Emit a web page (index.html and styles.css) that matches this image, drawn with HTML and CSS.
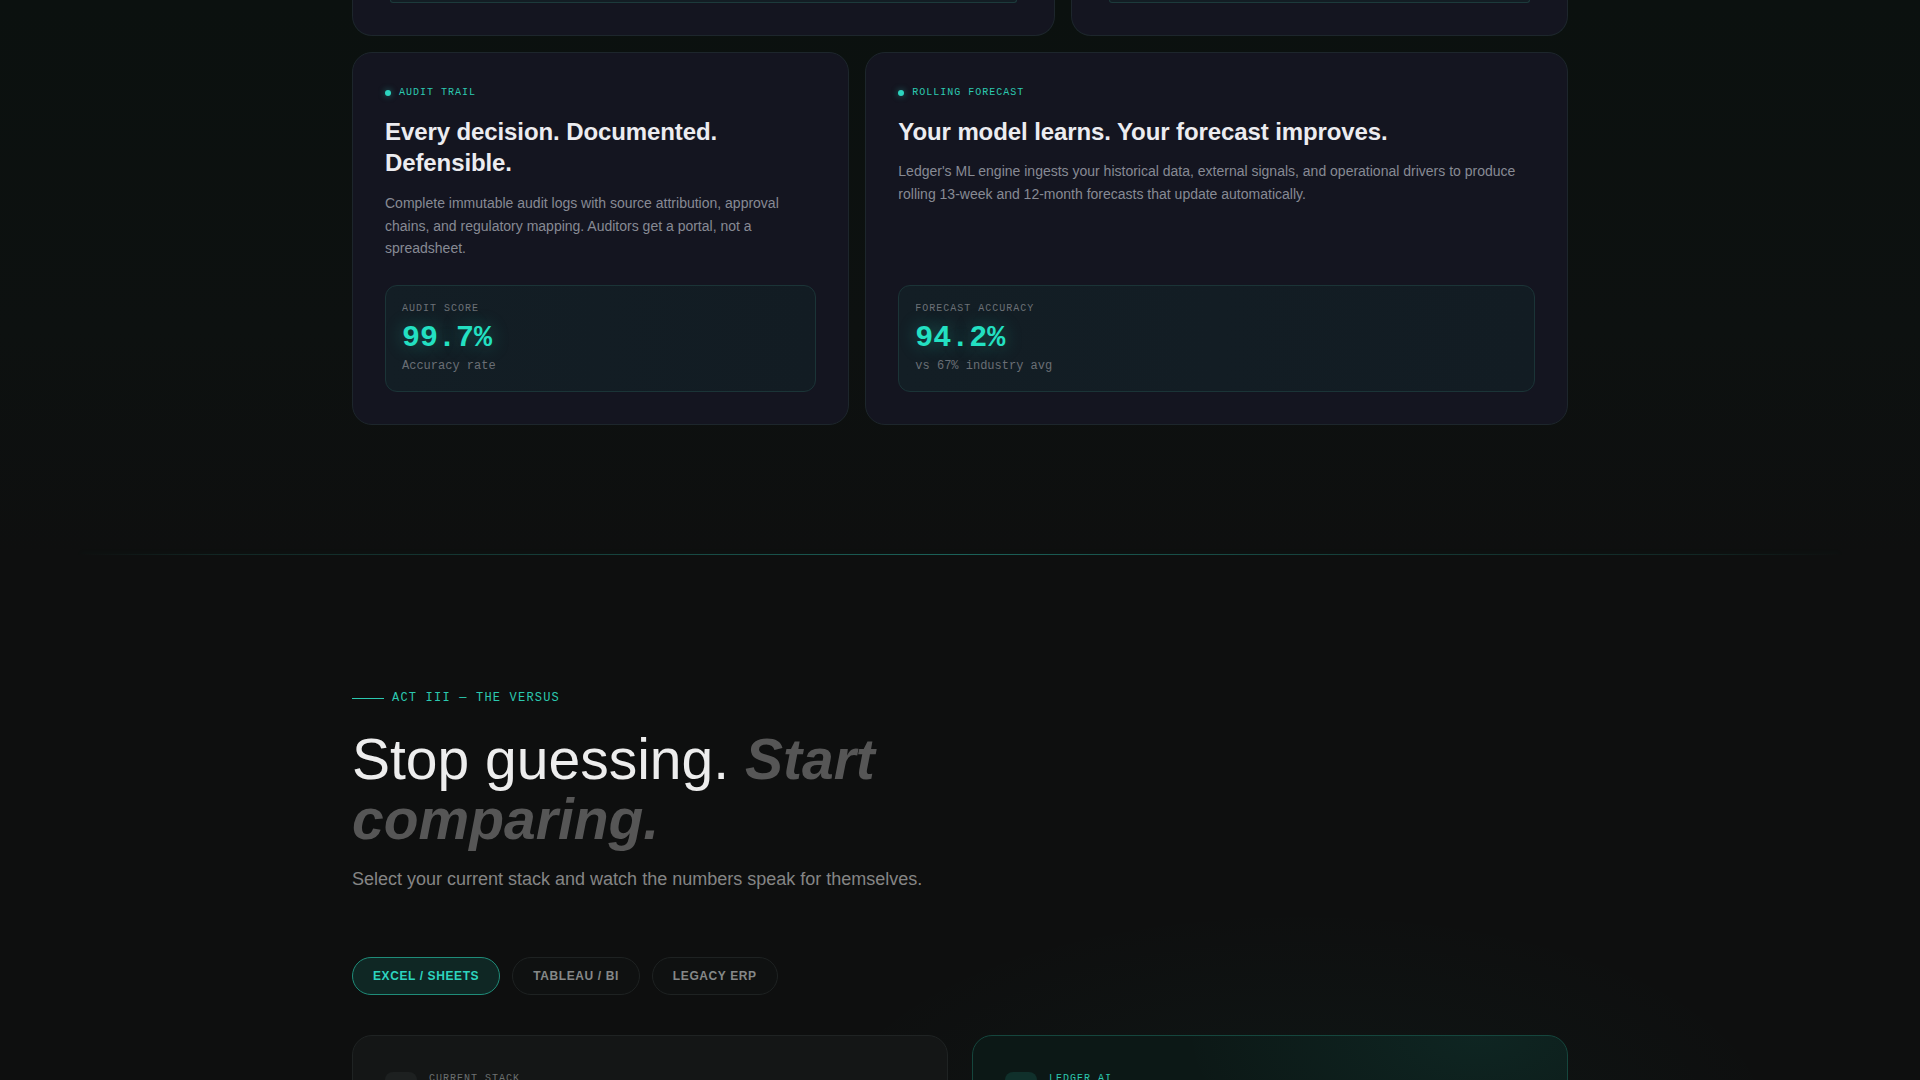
FILE: index.html
```html
<!DOCTYPE html>
<html lang="en">
<head>
<meta charset="utf-8">
<title>Ledger — Features &amp; Versus</title>
<link rel="stylesheet" href="styles.css">
</head>
<body>
  <section class="features">
    <div class="container grid12">
      <div class="card card-top span7"><div class="top-inner"></div></div>
      <div class="card card-top span5"><div class="top-inner"></div></div>

      <article class="card feature span5">
        <div class="tag"><span class="dot"></span>AUDIT TRAIL</div>
        <h3 class="feature-title">Every decision. Documented. Defensible.</h3>
        <p class="feature-desc">Complete immutable audit logs with source attribution, approval chains, and regulatory mapping. Auditors get a portal, not a spreadsheet.</p>
        <div class="stat">
          <div class="stat-label">AUDIT SCORE</div>
          <div class="stat-value">99.7%</div>
          <div class="stat-sub">Accuracy rate</div>
        </div>
      </article>

      <article class="card feature span7">
        <div class="tag"><span class="dot"></span>ROLLING FORECAST</div>
        <h3 class="feature-title">Your model learns. Your forecast improves.</h3>
        <p class="feature-desc">Ledger's ML engine ingests your historical data, external signals, and operational drivers to produce rolling 13-week and 12-month forecasts that update automatically.</p>
        <div class="stat">
          <div class="stat-label">FORECAST ACCURACY</div>
          <div class="stat-value">94.2%</div>
          <div class="stat-sub">vs 67% industry avg</div>
        </div>
      </article>
    </div>
  </section>

  <div class="divider"></div>

  <section class="versus">
    <div class="container">
      <div class="eyebrow"><span class="eyebrow-line"></span>ACT III — THE VERSUS</div>
      <h2 class="versus-title">Stop guessing. <em>Start comparing.</em></h2>
      <p class="versus-sub">Select your current stack and watch the numbers speak for themselves.</p>

      <div class="pills">
        <button class="pill active">EXCEL / SHEETS</button>
        <button class="pill">TABLEAU / BI</button>
        <button class="pill">LEGACY ERP</button>
      </div>

      <div class="compare">
        <div class="cmp-card cmp-old">
          <div class="cmp-head">
            <div class="cmp-icon"></div>
            <div>
              <div class="cmp-label">CURRENT STACK</div>
              <div class="cmp-name">Excel / Sheets</div>
            </div>
          </div>
        </div>
        <div class="cmp-card cmp-new">
          <div class="cmp-head">
            <div class="cmp-icon"></div>
            <div>
              <div class="cmp-label">LEDGER AI</div>
              <div class="cmp-name">Ledger</div>
            </div>
          </div>
        </div>
      </div>
    </div>
  </section>
</body>
</html>
```

FILE: styles.css
```css
* { box-sizing: border-box; }

html, body {
  margin: 0;
  padding: 0;
}

body {
  background: #0e0f0f;
  font-family: "Liberation Sans", Arial, sans-serif;
  color: #ececf0;
  overflow: hidden;
}

.container {
  width: 1216px;
  margin: 0 auto;
}

/* ---------- features ---------- */
.features {
  background: linear-gradient(180deg, #0b110f 0%, #0d1110 60%, #0e0f0f 100%);
  padding-bottom: 129px;
}

.grid12 {
  display: grid;
  grid-template-columns: repeat(12, 1fr);
  gap: 16px;
}

.span7 { grid-column: span 7; }
.span5 { grid-column: span 5; }

.card {
  background: #141520;
  border: 1px solid #1d262c;
  border-radius: 20px;
}

.card-top {
  border-top: 0;
  border-radius: 0 0 20px 20px;
  padding: 0 37px 32px;
}

.top-inner {
  height: 3px;
  background: #131d24;
  border: 1px solid #1c3a3b;
  border-top: 0;
  border-radius: 0 0 10px 10px;
}

.feature {
  padding: 32px;
  display: flex;
  flex-direction: column;
}

.tag {
  display: flex;
  align-items: center;
  gap: 8px;
  font-family: "Liberation Mono", "DejaVu Sans Mono", monospace;
  font-size: 10px;
  line-height: 15px;
  letter-spacing: 1px;
  color: #2cc9b0;
  margin-bottom: 16px;
}

.dot {
  width: 6px;
  height: 6px;
  border-radius: 50%;
  background: #2dd4bf;
  box-shadow: 0 0 6px rgba(45, 212, 191, 0.5);
}

.feature-title {
  margin: 0 0 14px;
  font-size: 24px;
  line-height: 1.3;
  font-weight: 700;
  letter-spacing: -0.1px;
  color: #ececf0;
}

.span7 .feature-title { margin-bottom: 13px; }

.feature-desc {
  margin: 0;
  font-size: 14px;
  line-height: 1.6;
  color: #878a94;
}

.stat {
  margin-top: auto;
  background: linear-gradient(90deg, #131e25 0%, #121c23 100%);
  border: 1px solid #1b3437;
  border-radius: 12px;
  padding: 16px 16px 17px;
}

.span5.feature .stat { margin-top: 25px; }

.stat-label {
  font-family: "Liberation Mono", "DejaVu Sans Mono", monospace;
  font-size: 10px;
  line-height: 13px;
  letter-spacing: 1px;
  color: #6c7177;
  margin-bottom: 6px;
}

.stat-value {
  font-family: "Liberation Mono", "DejaVu Sans Mono", monospace;
  font-size: 30px;
  line-height: 33px;
  font-weight: 700;
  color: #23e0c2;
  text-shadow: 0 0 18px rgba(35, 224, 194, 0.35);
  margin-bottom: 4px;
  position: relative;
  top: 1px;
}

.stat-sub {
  font-family: "Liberation Mono", "DejaVu Sans Mono", monospace;
  font-size: 12px;
  line-height: 16.8px;
  color: #6a6f75;
}

/* ---------- divider ---------- */
.divider {
  height: 1px;
  margin: 0 80px;
  background: linear-gradient(90deg, rgba(45, 212, 191, 0) 0%, rgba(45, 212, 191, 0.12) 8%, rgba(45, 212, 191, 0.22) 25%, rgba(45, 212, 191, 0.42) 50%, rgba(45, 212, 191, 0.22) 75%, rgba(45, 212, 191, 0.12) 92%, rgba(45, 212, 191, 0) 100%);
  box-shadow: 0 0 6px rgba(45, 212, 191, 0.12);
}

/* ---------- versus ---------- */
.versus {
  padding-top: 134px;
  padding-bottom: 120px;
  background: radial-gradient(ellipse 700px 300px at 1300px 560px, rgba(45, 212, 191, 0.035), transparent 70%), #0e0f0f;
}

.eyebrow {
  display: flex;
  align-items: center;
  gap: 8px;
  font-family: "Liberation Mono", "DejaVu Sans Mono", monospace;
  font-size: 12px;
  line-height: 18px;
  letter-spacing: 1.2px;
  color: #2cc9b0;
}

.eyebrow-line {
  width: 32px;
  height: 1px;
  background: #2cc9b0;
}

.versus-title {
  margin: 23px 0 0;
  max-width: 720px;
  font-size: 57px;
  line-height: 1.05;
  font-weight: 400;
  color: #ededed;
}

.versus-title em {
  font-style: italic;
  font-weight: 700;
  color: #565656;
}

.versus-sub {
  margin: 15px 0 0;
  font-size: 18px;
  line-height: 1.6;
  color: #858585;
}

.pills {
  display: flex;
  gap: 12px;
  margin-top: 63px;
}

.pill {
  font-family: "Liberation Sans", Arial, sans-serif;
  font-size: 12px;
  line-height: 14px;
  font-weight: 700;
  letter-spacing: 0.6px;
  padding: 11px 20px;
  border-radius: 999px;
  border: 1px solid #1e2222;
  background: #0f1111;
  color: #858888;
}

.pill.active {
  background: #0f2724;
  border-color: #1f8c79;
  color: #2dd4bf;
}

.compare {
  display: grid;
  grid-template-columns: 1fr 1fr;
  gap: 24px;
  margin-top: 40px;
}

.cmp-card {
  border-radius: 20px;
  padding: 36px 32px;
  min-height: 320px;
}

.cmp-old {
  background: #141616;
  border: 1px solid #1f2323;
}

.cmp-new {
  background: radial-gradient(ellipse 420px 220px at 85% 0%, rgba(45, 212, 191, 0.07), transparent 70%), #0c1816;
  border: 1px solid #15463d;
}

.cmp-head {
  display: flex;
  align-items: flex-start;
  gap: 12px;
}

.cmp-icon {
  width: 32px;
  height: 32px;
  border-radius: 8px;
  flex: none;
}

.cmp-old .cmp-icon { background: #1d2020; }
.cmp-new .cmp-icon { background: #10302b; }

.cmp-label {
  font-family: "Liberation Mono", "DejaVu Sans Mono", monospace;
  font-size: 10px;
  line-height: 13px;
  letter-spacing: 1px;
  color: #6c7070;
}

.cmp-new .cmp-label { color: #2cc9b0; }

.cmp-name {
  margin-top: 4px;
  font-size: 16px;
  font-weight: 700;
  color: #d8d8d8;
}
```
